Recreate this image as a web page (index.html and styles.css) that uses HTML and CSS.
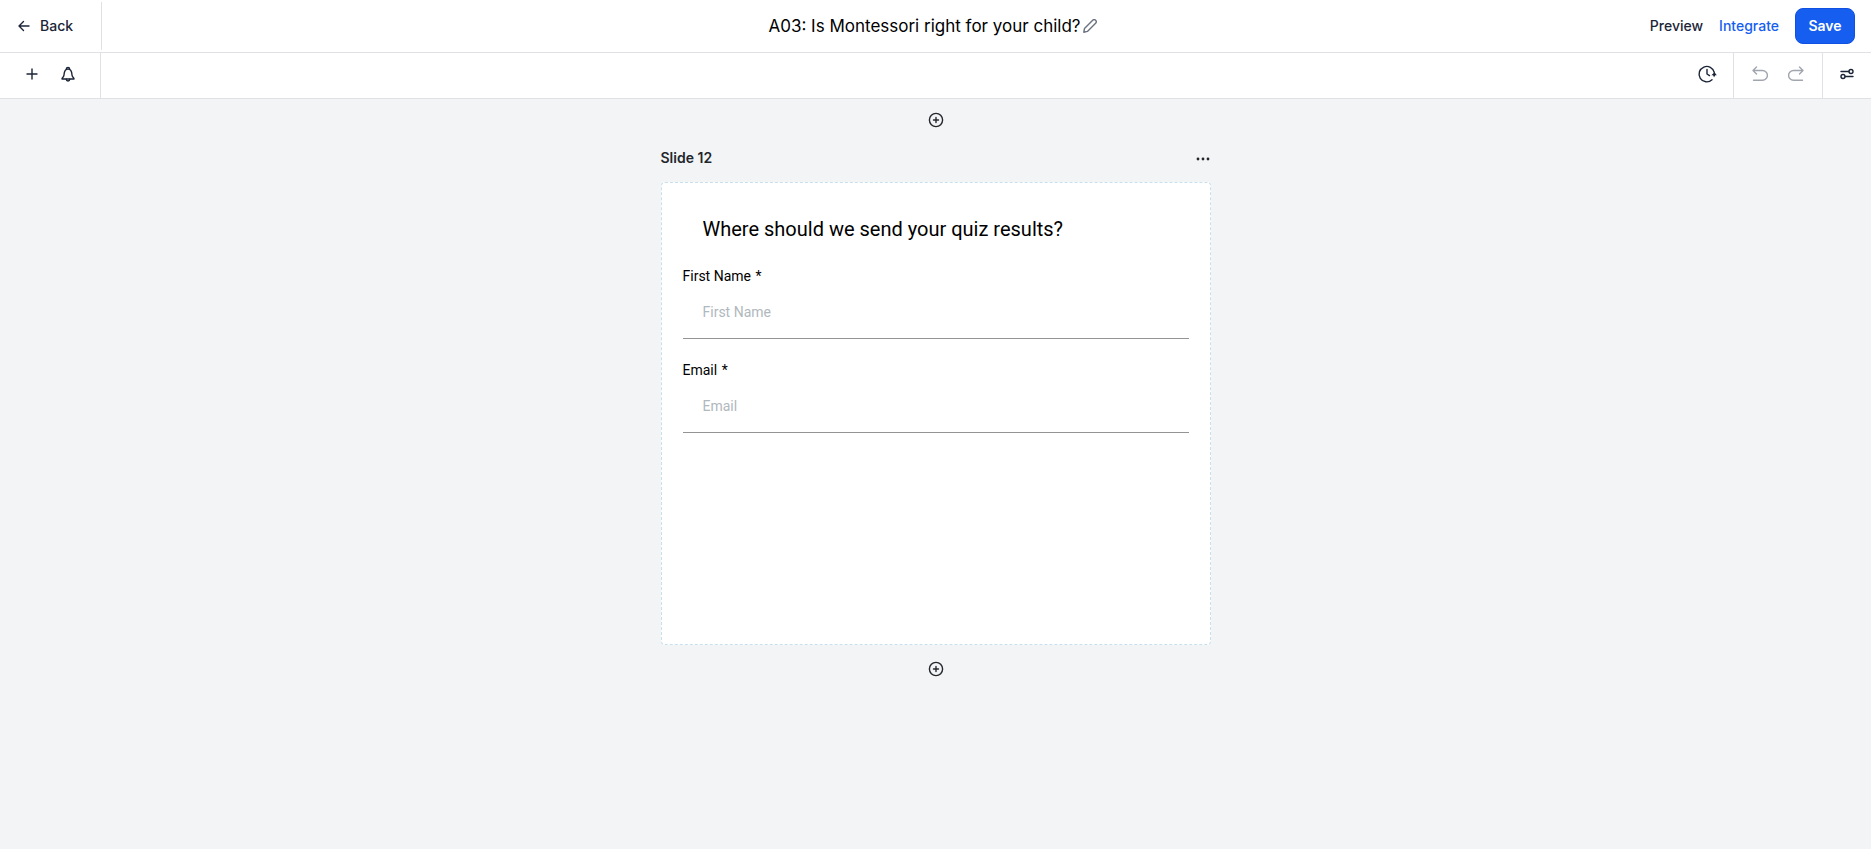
FILE: index.html
```html
<!DOCTYPE html>
<html lang="en">
<head>
    <meta charset="utf-8">
    <title>Quiz Builder</title>
    <link rel="stylesheet" href="styles.css">
</head>
<body>
    <header class="header">
        <div class="header-left">
            <a href="#" class="back">
                <svg width="12" height="12" viewBox="0 0 12 12"><path d="M11 6H1M5.5 1.5L1 6l4.5 4.5"/></svg>
                Back
            </a>
        </div>
        <div class="header-title">
            <h1>A03: Is Montessori right for your child?</h1>
            <button type="button" class="icon-btn rename" aria-label="Rename">
                <svg width="14" height="14" viewBox="0 0 14 14"><path d="M.8 13.2l.7-3.7 8.2-8.2a1.9 1.9 0 0 1 2.9 2.900l-8.2 8.2z"/></svg>
            </button>
        </div>
        <nav class="header-right">
            <a href="#">Preview</a>
            <a href="#" class="integrate">Integrate</a>
            <button type="button" class="save">Save</button>
        </nav>
    </header>

    <div class="toolbar">
        <div class="tools tools-add">
            <button type="button" class="icon-btn" aria-label="Add">
                <svg width="16" height="16" viewBox="0 0 16 16"><path d="M8 3v10M3 8h10"/></svg>
            </button>
            <button type="button" class="icon-btn" aria-label="Notifications">
                <svg width="16" height="16" viewBox="0 0 16 16"><path d="M2 13h12c.1-1.3-1.8-1.8-2-4C11.800 5.500 11 3 8 3S4.200 5.500 4 9c-.2 2.200-2.100 2.700-2 4z"/><path d="M6.400 3a1.600 1.600 0 0 1 3.200 0M6.300 13.300a1.700 1.700 0 0 0 3.400 0"/></svg>
            </button>
        </div>
        <div class="tools tools-history">
            <button type="button" class="icon-btn" aria-label="Version history">
                <svg width="20" height="20" viewBox="0 0 20 20"><path d="M15 15.800A7.700 7.700 0 1 1 17.300 8.500M10 5.500V10l2.500 1.600"/><path class="fill" d="M14.400 11.300l3.100-3.100 2.300 3.100h-1.500l-1.200 2-1.100-2z"/></svg>
            </button>
        </div>
        <div class="tools tools-undo">
            <button type="button" class="icon-btn" aria-label="Undo" disabled>
                <svg width="16" height="16" viewBox="0 0 16 16"><path d="M4.5 1L1 4.500 4.500 8M1 4.500h9.500a4.900 4.900 0 0 1 0 9.800H1.500"/></svg>
            </button>
            <button type="button" class="icon-btn" aria-label="Redo" disabled>
                <svg width="16" height="16" viewBox="0 0 16 16"><path d="M11.500 1L15 4.500 11.500 8M15 4.500H5.500a4.900 4.900 0 0 0 0 9.800h9"/></svg>
            </button>
        </div>
        <div class="tools tools-settings">
            <button type="button" class="icon-btn" aria-label="Settings">
                <svg width="16" height="16" viewBox="0 0 16 16"><path d="M2 5.500h7.800M6.200 10.500h7.800"/><circle cx="12" cy="5.500" r="2"/><circle cx="4" cy="10.500" r="2"/></svg>
            </button>
        </div>
    </div>

    <main class="canvas">
        <button type="button" class="icon-btn" aria-label="Add slide before">
            <svg width="16" height="16" viewBox="0 0 16 16"><circle cx="8" cy="8" r="6.6"/><path d="M8 5.500v5M5.500 8h5"/></svg>
        </button>

        <section class="slide">
            <div class="slide-head">
                <h2>Slide 12</h2>
                <button type="button" class="icon-btn" aria-label="Slide options">
                    <svg width="16" height="16" viewBox="0 0 16 16"><g class="fill"><circle cx="3" cy="9" r="1.400"/><circle cx="8" cy="9" r="1.400"/><circle cx="13" cy="9" r="1.400"/></g></svg>
                </button>
            </div>
            <form class="card">
                <h3>Where should we send your quiz results?</h3>
                <label for="firstName">First Name <span>*</span></label>
                <input type="text" id="firstName" placeholder="First Name" required>
                <label for="email">Email <span>*</span></label>
                <input type="email" id="email" placeholder="Email" required>
            </form>
        </section>

        <button type="button" class="icon-btn" aria-label="Add slide after">
            <svg width="16" height="16" viewBox="0 0 16 16"><circle cx="8" cy="8" r="6.6"/><path d="M8 5.500v5M5.500 8h5"/></svg>
        </button>
    </main>
</body>
</html>
```
FILE: styles.css
```css
* {
    box-sizing: border-box;
}

body {
    margin: 0;
    min-height: 100vh;
    background-color: #f3f4f6;
    color: #1b2537;
    font-family: Inter, "Liberation Sans", sans-serif;
    font-size: 14px;
}

h1, h2, h3 {
    margin: 0;
}

a {
    color: inherit;
    text-decoration: none;
}

svg {
    display: block;
    fill: none;
    stroke: currentColor;
    stroke-width: 1.4;
    stroke-linecap: round;
    stroke-linejoin: round;
}

svg .fill {
    fill: currentColor;
    stroke: none;
}

.icon-btn {
    display: flex;
    padding: 0;
    border: none;
    background: none;
    color: inherit;
    cursor: pointer;
}

/* Header */
.header {
    display: grid;
    grid-template-columns: 1fr auto 1fr;
    align-items: center;
    height: 53px;
    padding-right: 6px;
    background-color: #fff;
    border-bottom: 1px solid #e0e1e4;
    font-weight: 500;
}

.header-left {
    display: flex;
    align-items: center;
    width: 102px;
    height: 48px;
    padding-left: 18px;
    border-right: 1px solid #e0e1e4;
}

.back {
    display: flex;
    align-items: center;
    gap: 10px;
    line-height: 16px;
}

.header-title {
    display: flex;
    align-items: center;
    gap: 2px;
}

.header-title h1 {
    color: #000;
    font-size: 17px;
    font-weight: 400;
}

.rename {
    color: #6b7280;
}

.header-right {
    display: flex;
    align-items: center;
    justify-content: flex-end;
    gap: 16px;
    padding-right: 10px;
    line-height: 16px;
}

.integrate {
    color: #155eef;
}

.save {
    width: 60px;
    height: 36px;
    padding: 0;
    border: 1px solid #1150e0;
    border-radius: 8px;
    background-color: #155eef;
    color: #fff;
    font: inherit;
    font-weight: 600;
    cursor: pointer;
}

/* Toolbar */
.toolbar {
    display: flex;
    height: 46px;
    background-color: #fff;
    border-bottom: 1px solid #e0e1e4;
}

.tools {
    display: flex;
    align-items: center;
    padding-bottom: 4px;
}

.tools-add {
    gap: 20px;
    width: 101px;
    padding-left: 24px;
    border-right: 1px solid #e0e1e4;
}

.tools-history {
    margin-left: auto;
    padding-right: 16px;
}

.tools-undo {
    gap: 20px;
    padding-left: 18px;
    padding-right: 18px;
    border-left: 1px solid #e0e1e4;
    border-right: 1px solid #e0e1e4;
}

.tools-undo .icon-btn {
    color: #a1a5ae;
}

.tools-settings {
    padding-left: 16px;
    padding-right: 16px;
}

/* Canvas */
.canvas {
    display: flex;
    flex-direction: column;
    align-items: center;
    gap: 16px;
    padding: 13px 0;
    color: #23262b;
}

.slide {
    width: 550px;
    max-width: 100%;
}

.slide-head {
    display: flex;
    align-items: center;
    justify-content: space-between;
    height: 28px;
    margin-bottom: 10px;
}

.slide-head h2 {
    font-size: 14px;
    font-weight: 600;
    line-height: 16px;
}

.card {
    min-height: 463px;
    padding: 32px 21px;
    border: 1px dashed #c8dfee;
    border-radius: 4px;
    background-color: #fff;
    color: #000;
    font-family: Roboto, "Liberation Sans", sans-serif;
}

.card h3 {
    margin-bottom: 23px;
    padding-left: 20px;
    font-size: 20px;
    font-weight: 400;
    line-height: 28px;
}

.card label {
    display: block;
    font-size: 14px;
    line-height: 20px;
}

.card label span {
    margin-left: 1px;
}

.card input {
    display: block;
    width: 100%;
    height: 53px;
    margin-bottom: 21px;
    padding: 0 20px;
    border: none;
    border-bottom: 1px solid #949494;
    background: none;
    font: inherit;
    font-size: 14px;
    outline: none;
}

.card input::placeholder {
    color: #b0b8bd;
}
```
